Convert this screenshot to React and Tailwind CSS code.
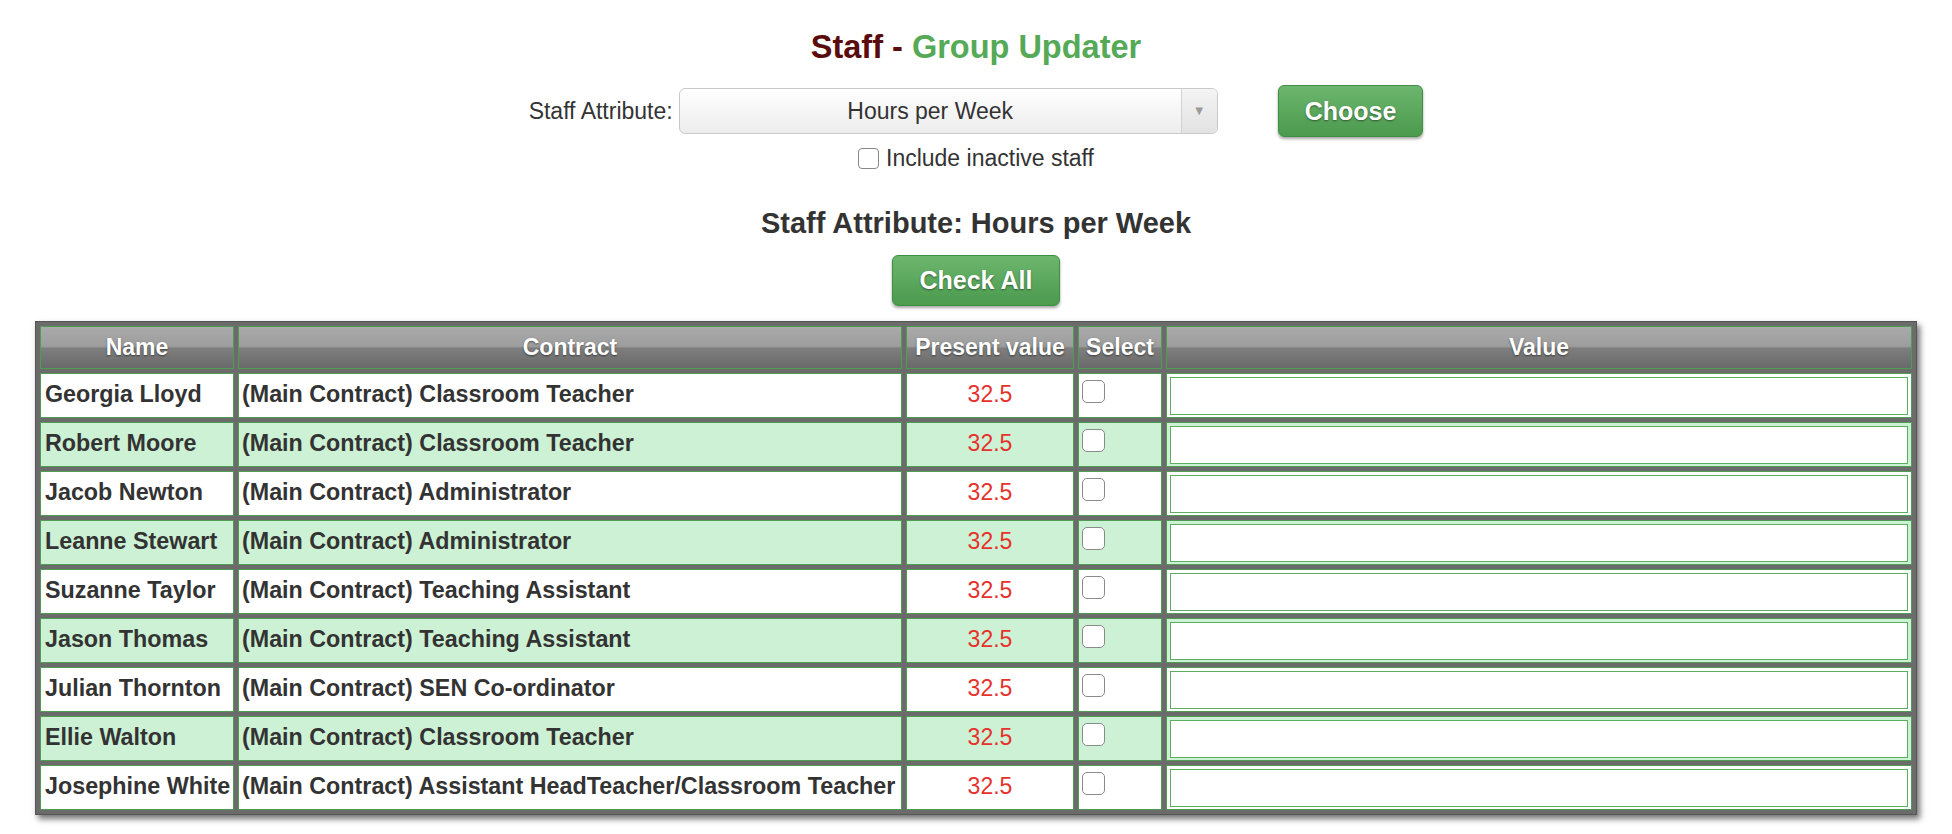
import React from 'react';

const staff = [
    { name: 'Georgia Lloyd', contract: '(Main Contract) Classroom Teacher' },
    { name: 'Robert Moore', contract: '(Main Contract) Classroom Teacher' },
    { name: 'Jacob Newton', contract: '(Main Contract) Administrator' },
    { name: 'Leanne Stewart', contract: '(Main Contract) Administrator' },
    { name: 'Suzanne Taylor', contract: '(Main Contract) Teaching Assistant' },
    { name: 'Jason Thomas', contract: '(Main Contract) Teaching Assistant' },
    { name: 'Julian Thornton', contract: '(Main Contract) SEN Co-ordinator' },
    { name: 'Ellie Walton', contract: '(Main Contract) Classroom Teacher' },
    { name: 'Josephine White', contract: '(Main Contract) Assistant HeadTeacher/Classroom Teacher' },
];

const GreenButton = ({ children, className = '' }) => (
    <button
        className={`h-[52px] px-[26px] rounded-[6px] border border-[#3f8e43] bg-[linear-gradient(to_bottom,#6cb66d,#4b9a4e)] text-white font-bold text-[25px] leading-none shadow-[0_2px_3px_rgba(0,0,0,0.35)] [text-shadow:0_1px_2px_rgba(0,0,0,0.45)] ${className}`}
    >
        {children}
    </button>
);

const headCell =
    'h-[43px] border border-[#4f9d52] bg-[linear-gradient(to_bottom,#aaaaaa_0%,#9d9d9d_47%,#7e7e7e_52%,#696969_100%)] text-white font-bold text-[23px] text-center [text-shadow:0_1px_2px_rgba(0,0,0,0.5)] p-0';

const App = () => {
    return (
        <div className="min-h-screen bg-white pb-10 text-[#333] font-['Liberation_Sans',Arial,Helvetica,sans-serif]">
            <div className="flex flex-col items-center pt-[29px]">
                <h1 className="text-[32.5px] leading-[36px] font-bold">
                    <span className="text-[#5a0c0c]">Staff - </span>
                    <span className="text-[#55a957]">Group Updater</span>
                </h1>

                <div className="flex items-center mt-[20px] h-[52px]">
                    <span className="text-[23px] text-[#333] mr-[6px]">Staff Attribute:</span>
                    <div className="flex w-[539px] h-[46px] rounded-[6px] border border-[#c9c9c9] bg-[linear-gradient(to_bottom,#ffffff,#ececec)] overflow-hidden">
                        <div className="flex-1 flex items-center justify-center text-[23px] text-[#333]">Hours per Week</div>
                        <div className="w-[36px] border-l border-[#d2d2d2] bg-[linear-gradient(to_bottom,#f4f4f4,#e2e2e2)] flex items-center justify-center text-[13px] text-[#999]">
                            ▼
                        </div>
                    </div>
                    <GreenButton className="ml-[60px]">Choose</GreenButton>
                </div>

                <label className="flex items-center mt-[7px] h-[28px] text-[23px] text-[#333]">
                    <span className="w-[21px] h-[21px] rounded-[4px] border-[1.5px] border-[#888] bg-white mr-[7px]" />
                    Include inactive staff
                </label>

                <h2 className="mt-[34px] text-[29px] leading-[34px] font-bold text-[#333]">Staff Attribute: Hours per Week</h2>

                <GreenButton className="mt-[15px] !h-[51px]">Check All</GreenButton>
            </div>

            <div className="mx-[35px] mt-[15px] shadow-[3px_4px_6px_rgba(0,0,0,0.55)]">
                <table className="w-full table-fixed border-separate border-spacing-[4px] bg-[#6b6b6b] border border-[#555]">
                    <thead>
                        <tr>
                            <th className={`${headCell} w-[194px]`}>Name</th>
                            <th className={`${headCell} w-[664px]`}>Contract</th>
                            <th className={`${headCell} w-[168px]`}>Present value</th>
                            <th className={`${headCell} w-[84px]`}>Select</th>
                            <th className={headCell}>Value</th>
                        </tr>
                    </thead>
                    <tbody>
                        {staff.map((s, i) => {
                            const bg = i % 2 === 1 ? 'bg-[#cdf1d4]' : 'bg-white';
                            const cell = `h-[45px] border border-[#4f9d52] ${bg}`;
                            return (
                                <tr key={s.name}>
                                    <td className={`${cell} pl-[4px] pr-0 pb-[2px] font-bold text-[23.3px] whitespace-nowrap`}>{s.name}</td>
                                    <td className={`${cell} pl-[3px] pr-0 pb-[2px] font-bold text-[23.3px] whitespace-nowrap`}>{s.contract}</td>
                                    <td className={`${cell} pb-[2px] text-center text-[23px] text-[#e5322b]`}>32.5</td>
                                    <td className={`${cell} align-top pt-[6px] pl-[3px]`}>
                                        <span className="block w-[23px] h-[23px] rounded-[5px] border-[1.5px] border-[#8a8a8a] bg-white" />
                                    </td>
                                    <td className={`${cell} px-[3px] py-[2px]`}>
                                        <input type="text" className="block w-full h-[38px] border border-[#5aae5d] bg-white outline-none" />
                                    </td>
                                </tr>
                            );
                        })}
                    </tbody>
                </table>
            </div>
        </div>
    );
};

export default App;
